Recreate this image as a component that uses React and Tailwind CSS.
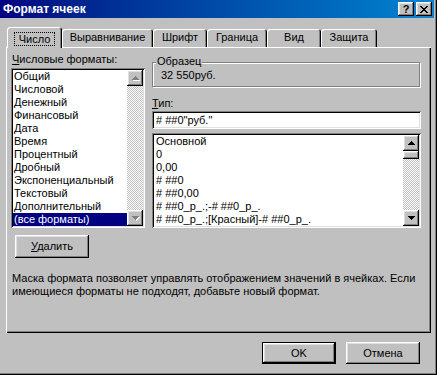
import React from 'react';

const raised =
  'shadow-[inset_-1px_-1px_#000,inset_1px_1px_#fff,inset_-2px_-2px_#808080,inset_2px_2px_#dfdfdf]';
const sunken =
  'shadow-[inset_1px_1px_#808080,inset_-1px_-1px_#fff,inset_2px_2px_#000,inset_-2px_-2px_#dfdfdf]';

const UP = 'M3 0h1v1h1v1h1v1h1v1H0V3h1V2h1V1h1z';
const DOWN = 'M0 0h7v1H6v1H5v1H4v1H3V3H2V2H1V1H0z';

const Arrow = ({ dir, disabled }) => (
  <svg width="8" height="5" viewBox="0 0 8 5">
    {disabled && <path d={dir === 'up' ? UP : DOWN} fill="#fff" transform="translate(1 1)" />}
    <path d={dir === 'up' ? UP : DOWN} fill={disabled ? '#808080' : '#000'} />
  </svg>
);

const ScrollBtn = ({ dir, disabled }) => (
  <div className={`w-[16px] h-[16px] bg-[#c0c0c0] flex items-center justify-center pl-px ${raised}`}>
    <Arrow dir={dir} disabled={disabled} />
  </div>
);

const track =
  'bg-[repeating-conic-gradient(#c0c0c0_0%_25%,#ffffff_0%_50%)] bg-size-[2px_2px]';

const formats = [
  'Общий',
  'Числовой',
  'Денежный',
  'Финансовый',
  'Дата',
  'Время',
  'Процентный',
  'Дробный',
  'Экспоненциальный',
  'Текстовый',
  'Дополнительный',
  '(все форматы)',
];

const types = [
  'Основной',
  '0',
  '0,00',
  '# ##0',
  '# ##0,00',
  '# ##0_р_.;-# ##0_р_.',
  '# ##0_р_.;[Красный]-# ##0_р_.',
];

const tabs = [
  { label: 'Выравнивание', w: 'w-[91px]' },
  { label: 'Шрифт', w: 'w-[54px]' },
  { label: 'Граница', w: 'w-[60px]' },
  { label: 'Вид', w: 'w-[54px]' },
  { label: 'Защита', w: 'w-[56px]' },
];

export default function App() {
  return (
    <div className="w-[437px] h-[375px] bg-[#c0c0c0] text-black text-[11px] font-['Liberation_Sans',Arial,sans-serif] shadow-[inset_-1px_-1px_#000,inset_-2px_-2px_#808080] flex flex-col overflow-hidden">
      {/* Title bar */}
      <div className="w-[434px] h-[18px] bg-gradient-to-r from-[#000080] to-[#1084d0] flex items-center justify-between pl-[3px] pr-[2px]">
        <span className="text-white font-bold text-[12px] leading-none">Формат ячеек</span>
        <div className="flex gap-[2px]">
          <div className={`w-[16px] h-[14px] bg-[#c0c0c0] flex items-center justify-center font-bold text-[11px] leading-none ${raised}`}>
            ?
          </div>
          <div className={`w-[16px] h-[14px] bg-[#c0c0c0] flex items-center justify-center ${raised}`}>
            <svg width="8" height="7" viewBox="0 0 8 7">
              <path d="M0 0h2v1h1v1h2V1h1V0h2v1H7v1H6v1H5v1h1v1h1v1h1v1H6V6H5V5H3v1H2v1H0V6h1V5h1V4h1V3H2V2H1V1H0z" fill="#000" />
            </svg>
          </div>
        </div>
      </div>

      {/* Tabs */}
      <div className="mt-[9px] h-[20px] pl-[7px] flex items-end">
        <div className="relative z-10 w-[55px] h-[21px] mb-[-1px] bg-[#c0c0c0] rounded-t-[3px] shadow-[inset_1px_1px_#fff,inset_-1px_0_#000,inset_-2px_0_#808080] flex items-start justify-center pt-[5px]">
          <span className="border border-dotted border-black px-[4px] h-[14px] leading-[12px]">Число</span>
        </div>
        {tabs.map((t) => (
          <div
            key={t.label}
            className={`${t.w} h-[18px] bg-[#c0c0c0] rounded-t-[3px] shadow-[inset_1px_1px_#fff,inset_-1px_0_#000,inset_-2px_0_#808080] flex items-center justify-center pb-px`}
          >
            {t.label}
          </div>
        ))}
      </div>

      {/* Panel */}
      <div className="ml-[6px] w-[425px] h-[286px] shadow-[inset_1px_1px_#fff,inset_-1px_-1px_#000,inset_-2px_-2px_#808080] flex flex-col">
        <div className="flex">
          {/* Left column */}
          <div className="ml-[5px] w-[134px] pt-[6px] flex flex-col">
            <div className="h-[13px] leading-[13px] pl-px">
              <span className="underline underline-offset-1">Ч</span>исловые форматы:
            </div>
            <div className={`mt-[2px] h-[160px] bg-white p-[2px] flex ${sunken}`}>
              <div className="flex-1 flex flex-col">
                {formats.map((f, i) => (
                  <div
                    key={f}
                    className={`h-[13px] leading-[13px] pl-px whitespace-nowrap ${
                      i === formats.length - 1 ? 'bg-[#000080] text-white' : ''
                    }`}
                  >
                    {f}
                  </div>
                ))}
              </div>
              <div className={`w-[16px] flex flex-col justify-between ${track}`}>
                <ScrollBtn dir="up" disabled />
                <ScrollBtn dir="down" disabled />
              </div>
            </div>
          </div>

          {/* Right column */}
          <div className="ml-[7px] w-[269px] pt-[15px] flex flex-col">
            <div className="relative w-[268px] h-[25px] border border-[#808080] shadow-[inset_1px_1px_#fff,1px_1px_#fff] flex items-center pl-[8px] pt-[2px]">
              <span className="absolute -top-[8px] left-[3px] px-[1px] bg-[#c0c0c0] leading-[13px]">Образец</span>
              32 550руб.
            </div>
            <div className="mt-[10px] h-[13px] leading-[13px]">
              <span className="underline underline-offset-1">Т</span>ип:
            </div>
            <div className={`mt-[1px] h-[18px] bg-white flex items-center pl-[4px] ${sunken}`}>
              # ##0"руб."
            </div>
            <div className={`mt-[4px] h-[95px] bg-white p-[2px] flex ${sunken}`}>
              <div className="flex-1 flex flex-col pl-[2px]">
                {types.map((t) => (
                  <div key={t} className="h-[13px] leading-[13px] whitespace-nowrap">
                    {t}
                  </div>
                ))}
              </div>
              <div className={`w-[16px] flex flex-col ${track}`}>
                <ScrollBtn dir="up" />
                <div className={`h-[8px] bg-[#c0c0c0] ${raised}`} />
                <div className="flex-1" />
                <ScrollBtn dir="down" />
              </div>
            </div>
          </div>
        </div>

        <div className="mt-[7px] ml-[9px]">
          <div className={`w-[74px] h-[23px] bg-[#c0c0c0] flex items-center justify-center ${raised}`}>
            <span>
              <span className="underline underline-offset-1">У</span>далить
            </span>
          </div>
        </div>

        <div className="mt-[14px] ml-[6px] leading-[13px] whitespace-nowrap">
          Маска формата позволяет управлять отображением значений в ячейках. Если
          <br />
          имеющиеся форматы не подходят, добавьте новый формат.
        </div>
      </div>

      {/* Bottom buttons */}
      <div className="mt-[9px] ml-[262px] flex gap-[10px]">
        <div className="w-[74px] h-[22px] border border-black bg-[#c0c0c0]">
          <div className={`w-full h-full flex items-center justify-center ${raised}`}>OK</div>
        </div>
        <div className={`w-[74px] h-[22px] bg-[#c0c0c0] flex items-center justify-center ${raised}`}>
          Отмена
        </div>
      </div>
    </div>
  );
}
